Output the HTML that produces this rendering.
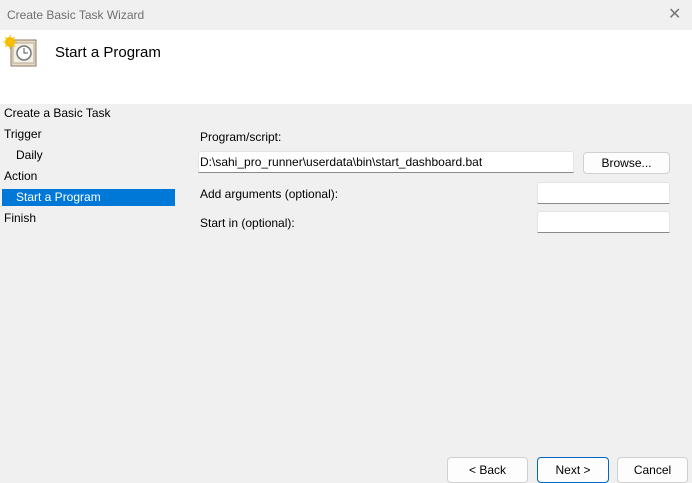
<!DOCTYPE html>
<html><head><style>
body{margin:0;width:692px;height:481px;background:#f0f0f0;font-family:"Liberation Sans",sans-serif;font-size:12px;color:#000;position:relative;overflow:hidden}
.a{position:absolute;white-space:nowrap}
.in{position:absolute;background:#fff;border:1px solid #e3e3e3;border-bottom:1px solid #8a8a8a;box-sizing:border-box;border-radius:3px 3px 0 0}
.bt{position:absolute;background:#fdfdfd;border:1px solid #d0d0d0;border-radius:4px;box-sizing:border-box;text-align:center;font-size:12px}
</style></head><body>
<div class="a" style="left:7px;top:8px;color:#6f6f6f;font-size:12px">Create Basic Task Wizard</div>
<div class="a" style="left:668px;top:4px;color:#777;font-size:16px">✕</div>
<div class="a" style="left:0;top:30px;width:692px;height:74px;background:#fff"></div>
<svg class="a" style="left:3px;top:35px" width="34" height="32" viewBox="0 0 34 32">
<rect x="8" y="5" width="25" height="26" fill="#e8dcc8" stroke="#8a7a64"/>
<rect x="10" y="8" width="21" height="20" fill="#f4efe5" stroke="#b9ab93"/>
<circle cx="21" cy="18" r="7" fill="#fff" stroke="#777" stroke-width="1.5"/>
<path d="M21 13v5h4" stroke="#555" fill="none"/>
<circle cx="7" cy="7" r="5" fill="#f7b500"/>
<path d="M7 0v14M0 7h14M2 2l10 10M12 2L2 12" stroke="#f7c600" stroke-width="1"/>
</svg>
<div class="a" style="left:55px;top:44px;font-size:15px">Start a Program</div>
<div class="a" style="left:4px;top:106px">Create a Basic Task</div>
<div class="a" style="left:4px;top:127px">Trigger</div>
<div class="a" style="left:16px;top:148px">Daily</div>
<div class="a" style="left:4px;top:169px">Action</div>
<div class="a" style="left:2px;top:189px;width:173px;height:17px;background:#0078d7"></div>
<div class="a" style="left:16px;top:190px;color:#fff">Start a Program</div>
<div class="a" style="left:4px;top:211px">Finish</div>
<div class="a" style="left:200px;top:130px">Program/script:</div>
<div class="in" style="left:198px;top:151px;width:376px;height:22px"></div>
<div class="a" style="left:200px;top:155px">D:\sahi_pro_runner\userdata\bin\start_dashboard.bat</div>
<div class="bt" style="left:583px;top:152px;width:87px;height:22px;line-height:20px">Browse...</div>
<div class="a" style="left:200px;top:187px">Add arguments (optional):</div>
<div class="in" style="left:537px;top:182px;width:133px;height:22px"></div>
<div class="a" style="left:200px;top:216px">Start in (optional):</div>
<div class="in" style="left:537px;top:211px;width:133px;height:22px"></div>
<div class="bt" style="left:447px;top:457px;width:81px;height:26px;line-height:25px">&lt; Back</div>
<div class="bt" style="left:537px;top:457px;width:72px;height:26px;line-height:24px;border:1.5px solid #0067c0">Next &gt;</div>
<div class="bt" style="left:617px;top:457px;width:71px;height:26px;line-height:25px">Cancel</div>
</body></html>
